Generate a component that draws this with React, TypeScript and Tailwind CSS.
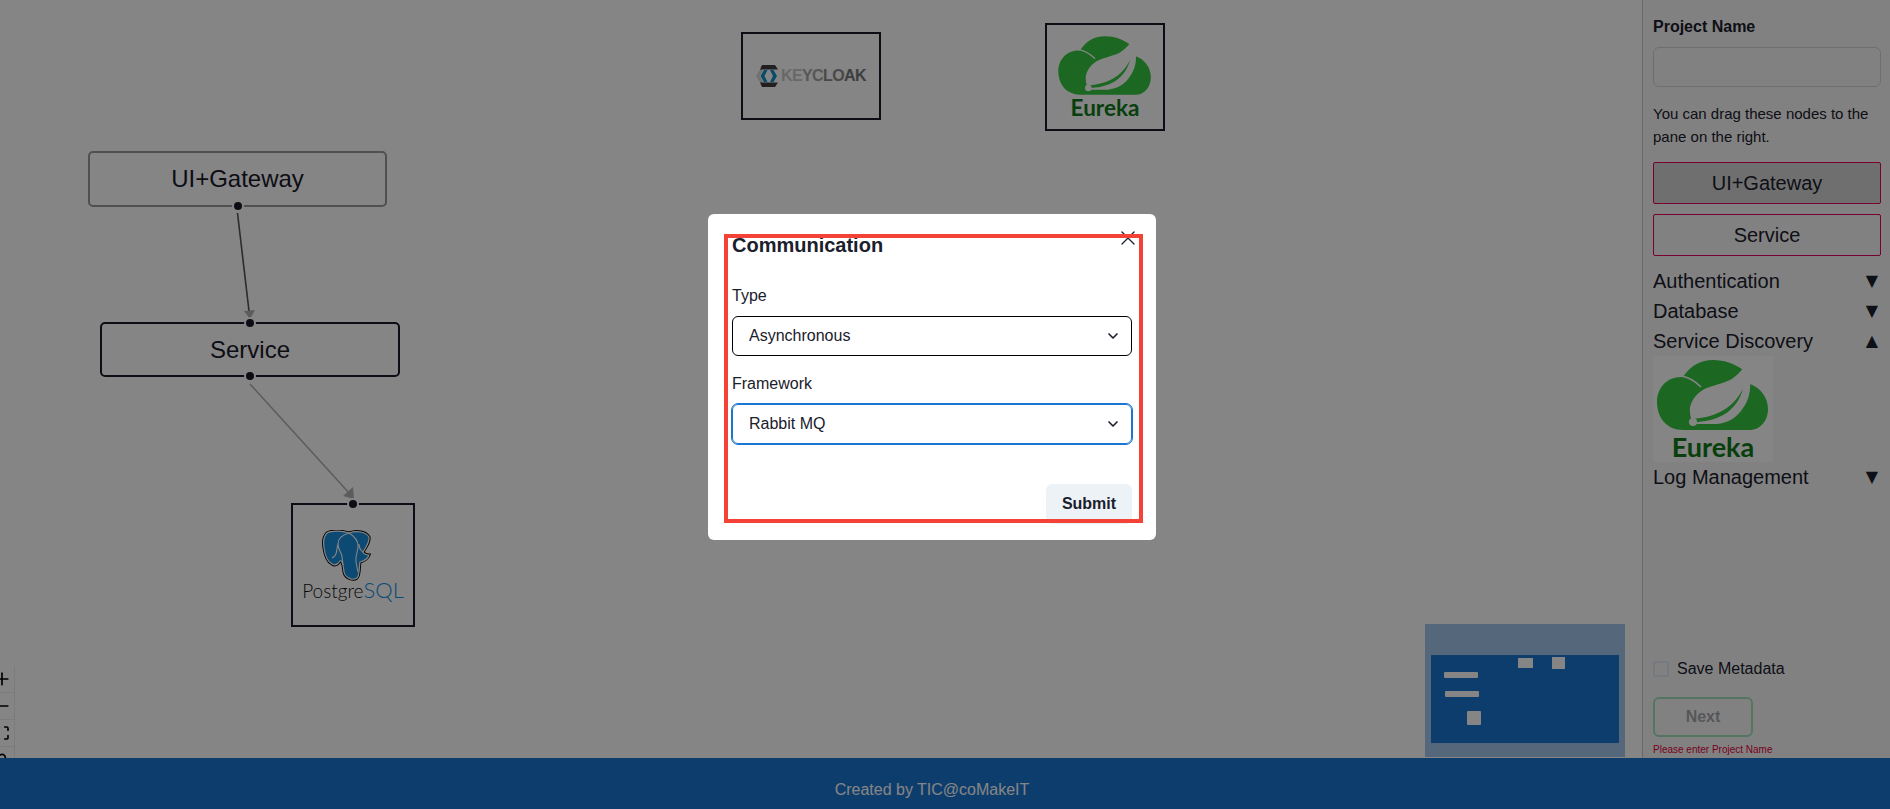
import React from 'react';
import { ChevronDown, Lock, Maximize, Minus, Plus, X } from 'lucide-react';

const font = { fontFamily: '"Liberation Sans", Arial, sans-serif' };

// Eureka logo: cloud drawn on a 120x78 box, the word under it
const EurekaLogo = ({ width }: { width: number }) => (
  <div className="flex flex-col items-center bg-white" style={{ width, height: (width * 106) / 120 }}>
    <svg width={width} viewBox="0 0 120 78" className="block shrink-0">
      <path
        fill="#36c843"
        d="M30 21 C38 9 48 4 60 4 C72 4 82 8 90 14 L97 28 C108 32 115 42 115 53 C115 65 107 74 97 74 L30 74 C14 74 4 62 4 46 C4 32 14 20 30 21 Z"
      />
      <path fill="none" stroke="#fff" strokeWidth="1.6" d="M28 20 C35 21 42 25 48 31" />
      <path
        fill="#fff"
        d="M93 9 C88 15 84 20 77 24 C66 29 54 30 47 36 C40 41 36 50 37 56 C37 60 38 62 39 64 L42 68 L64 68 C74 67 84 62 90 52 C96 44 98 34 97 23 C96 18 95 13 93 9 Z"
      />
      <path fill="#36c843" d="M40 63 C50 62 59 60 67 56 C76 52 84 44 90 33 C87 44 80 53 72 58 C62 64 50 66 42 66 Z" />
      <circle cx="40" cy="66" r="4" fill="#fff" />
    </svg>
    <span
      className="font-bold leading-none text-[#0f7a1a]"
      style={{ fontFamily: 'Lato, sans-serif', fontSize: (width * 27) / 120, marginTop: -width / 120 }}
    >
      Eureka
    </span>
  </div>
);

const KeycloakLogo = () => (
  <div className="flex items-center gap-[1px]">
    <svg width="24" height="24" viewBox="0 0 24 24">
      <path fill="#d8d8d8" d="M0 12 L5 4 L8 4 L3.5 12 L8 20 L5 20 Z" />
      <path fill="#3f3f3f" d="M6 1 H19 L22 5.5 H4 Z M4 18.5 H22 L19 23 H6 Z" />
      <path fill="#0f93c8" d="M8 6 L11.5 6 L8.5 12 L11.5 18 L8 18 L4.5 12 Z M14 6 L17.5 6 L21 12 L17.5 18 L14 18 L17 12 Z" />
    </svg>
    <span className="text-base font-bold tracking-[-0.6px] leading-none">
      <span className="text-[#c8c8c8]">KE</span>
      <span className="text-[#a8a8a8]">YC</span>
      <span className="text-[#8c8c8c]">LO</span>
      <span className="text-[#777]">AK</span>
    </span>
  </div>
);

const elephant =
  'M5 3 C1 7 1 12 2 18 C3 25 6 32 10 34 C13 36 16 34 18 31 C19 30 20 32 21 35 L22 42 C23 48 31 51 35 48 C38 45 37 36 38 32 C42 31 46 28 47 25 C44 25 42 24 41 22 C44 17 48 12 47 7 C44 2 35 0 27 3 C21 1 10 0 5 3 Z';

const PostgresLogo = () => (
  <div className="flex flex-col items-center pt-px">
    <svg width="50" height="52" viewBox="-1 0 50 52" className="-ml-[14px]">
      <path fill="#000" stroke="#000" strokeWidth="3" d={elephant} />
      <path fill="#1a8fdd" stroke="#fff" strokeWidth="1.2" d={elephant} />
      <path
        fill="none"
        stroke="#fff"
        strokeWidth="1.1"
        d="M27 3 C20 5 16 9 16 14 C16 19 19 22 20 26 C20 30 21 32 21 35 M27 3 C32 6 36 10 36 16 C36 22 33 26 34 32 L36 42 M16 14 C14 20 16 25 10 28 M41 22 C38 20 37 18 37 14"
      />
    </svg>
    <div className="leading-none -mt-[3px] whitespace-nowrap font-light" style={{ fontFamily: 'Lato, sans-serif' }}>
      <span className="text-[19px] text-[#111]">Postgre</span>
      <span className="text-[22px] text-[#1a8fdd]">SQL</span>
    </div>
  </div>
);

const Handle = ({ className }: { className: string }) => (
  <span className={`absolute left-1/2 -translate-x-1/2 w-3 h-3 rounded-full bg-[#1a192b] border-2 border-white ${className}`} />
);

// Nodes on the flow canvas
const Canvas = () => (
  <div className="relative flex-1 overflow-hidden bg-white">
    <svg className="absolute inset-0 w-full h-full">
      <line x1="237.5" y1="213" x2="249" y2="311" stroke="#555" strokeWidth="1.6" />
      <polygon points="244,311 255,310 250,319" fill="#b1b1b7" />
      <line x1="250" y1="384" x2="350" y2="494" stroke="#b1b1b7" strokeWidth="1.6" />
      <polygon points="343,496 353,487 354,499" fill="#b1b1b7" />
    </svg>

    <div className="absolute left-[88px] top-[151px] w-[299px] h-[56px] flex items-center justify-center rounded-[5px] border-2 border-[#999] text-2xl text-[#1a192b]">
      UI+Gateway
      <Handle className="-bottom-[7px]" />
    </div>
    <div className="absolute left-[100px] top-[322px] w-[300px] h-[55px] flex items-center justify-center rounded-[5px] border-2 border-[#1a192b] text-2xl text-[#1a192b]">
      Service
      <Handle className="-top-[7px]" />
      <Handle className="-bottom-[7px]" />
    </div>
    <div className="absolute left-[291px] top-[503px] w-[124px] h-[124px] flex items-center justify-center border-2 border-[#1a192b]">
      <PostgresLogo />
      <Handle className="-top-[7px]" />
    </div>
    <div className="absolute left-[741px] top-[32px] w-[140px] h-[88px] flex items-center justify-center border-2 border-[#1a192b]">
      <KeycloakLogo />
    </div>
    <div className="absolute left-[1045px] top-[23px] w-[120px] h-[108px] flex items-center justify-center border-2 border-[#1a192b]">
      <EurekaLogo width={100} />
    </div>

    {/* zoom controls, pushed partly off the pane */}
    <div className="absolute -left-[11px] top-[666px] w-[26px] flex flex-col bg-white text-black border-r border-[#eee]">
      <div className="h-[27px] flex items-center justify-center border-b border-[#eee]"><Plus size={20} /></div>
      <div className="h-[27px] flex items-center justify-center border-b border-[#eee]"><Minus size={20} /></div>
      <div className="h-[27px] flex items-center justify-center border-b border-[#eee]"><Maximize size={16} strokeWidth={2.5} /></div>
      <div className="h-[27px] flex items-center justify-center"><Lock size={16} strokeWidth={2.5} /></div>
    </div>

    {/* minimap */}
    <div className="absolute left-[1425px] top-[624px] w-[200px] h-[133px] bg-[#a3c8ec]">
      <svg width="200" height="133">
        <rect x="6" y="31" width="188" height="88" fill="#1976d2" />
        <rect x="19" y="48" width="34" height="6" rx="1" fill="#fff" />
        <rect x="20" y="67" width="34" height="6" rx="1" fill="#fff" />
        <rect x="42" y="87" width="14" height="14" rx="1" fill="#fff" />
        <rect x="93" y="34" width="15" height="10" fill="#fff" />
        <rect x="127" y="33" width="13" height="12" fill="#fff" />
      </svg>
    </div>
  </div>
);

const sections = [
  { name: 'Authentication', open: false },
  { name: 'Database', open: false },
  { name: 'Service Discovery', open: true },
  { name: 'Log Management', open: false },
];

const Sidebar = () => (
  <aside className="w-[248px] shrink-0 flex flex-col border-l border-[#c8c8c8] bg-[#f8f8f8] pl-[10px] pr-[9px] pt-[15px] text-[#1a202c]">
    <label className="font-bold text-base leading-6">Project Name</label>
    <input className="mt-[8px] h-10 w-full rounded-md border border-[#d4d4d4]" />
    <p className="mt-[15px] text-[15px] leading-[23px]">You can drag these nodes to the pane on the right.</p>
    <div className="mt-[14px] h-[42px] flex items-center justify-center border border-[#e6005c] rounded-[2px] bg-[#d5d5d5] text-xl">UI+Gateway</div>
    <div className="mt-[10px] h-[42px] flex items-center justify-center border border-[#e6005c] rounded-[2px] text-xl">Service</div>
    <div className="mt-[10px] flex flex-col">
      {sections.map((s) => (
        <div key={s.name}>
          <div className="h-[30px] flex items-center justify-between text-xl">
            <span>{s.name}</span>
            <span className="text-[16px] pr-[3px]" style={{ fontFamily: '"DejaVu Sans", sans-serif' }}>{s.open ? '▲' : '▼'}</span>
          </div>
          {s.open && <EurekaLogo width={120} />}
        </div>
      ))}
    </div>
    <label className="mt-[165px] flex items-center gap-2 text-base leading-6">
      <span className="w-4 h-4 rounded-[2px] border-2 border-[#e2e8f0]" />
      Save Metadata
    </label>
    <button className="mt-[16px] w-[100px] h-10 shrink-0 rounded-md border-2 border-[#68d391]/60 font-bold text-base text-[#1a202c]/40">Next</button>
    <p className="mt-[7px] text-[10px] leading-3 text-[#e6003c]">Please enter Project Name</p>
  </aside>
);

const Modal = () => (
  <div className="absolute left-[708px] top-[214px] w-[448px] h-[326px] rounded-md bg-white text-[#1a202c] px-6 pt-[16px]">
    <h2 className="text-xl font-bold leading-[30px]">Communication</h2>
    <button className="absolute left-[408px] top-[12px]"><X size={24} strokeWidth={1.3} /></button>

    <div className="mt-[24px] text-base leading-6">Type</div>
    <div className="relative mt-[8px]">
      <select defaultValue="Asynchronous" className="w-full h-10 appearance-none rounded-md border border-black bg-white pl-4 text-base outline-none">
        <option>Asynchronous</option>
      </select>
      <ChevronDown size={16} strokeWidth={2.5} className="absolute right-[11px] top-3" />
    </div>

    <div className="mt-[16px] text-base leading-6">Framework</div>
    <div className="relative mt-[8px]">
      <select defaultValue="Rabbit MQ" className="w-full h-10 appearance-none rounded-md border border-[#1976d2] outline outline-1 outline-[#1976d2] bg-white pl-4 text-base">
        <option>Rabbit MQ</option>
      </select>
      <ChevronDown size={16} strokeWidth={2.5} className="absolute right-[11px] top-3" />
    </div>

    <div className="mt-10 flex justify-end">
      <button className="h-10 w-[86px] rounded-md bg-[#edf2f7] font-bold text-base">Submit</button>
    </div>

    {/* red highlight round the form */}
    <div className="absolute left-[16px] top-[20px] w-[419px] h-[289px] border-4 border-[#f44336] pointer-events-none" />
  </div>
);

export default function App() {
  return (
    <div className="relative h-screen flex flex-col overflow-hidden" style={font}>
      <div className="flex flex-1 min-h-0">
        <Canvas />
        <Sidebar />
      </div>
      <footer className="h-[51px] shrink-0 flex items-center justify-center bg-[#1976d2] text-white text-base pr-[26px] pt-3">
        Created by TIC@coMakeIT
      </footer>
      <div className="absolute inset-0 bg-black/48" />
      <Modal />
    </div>
  );
}
